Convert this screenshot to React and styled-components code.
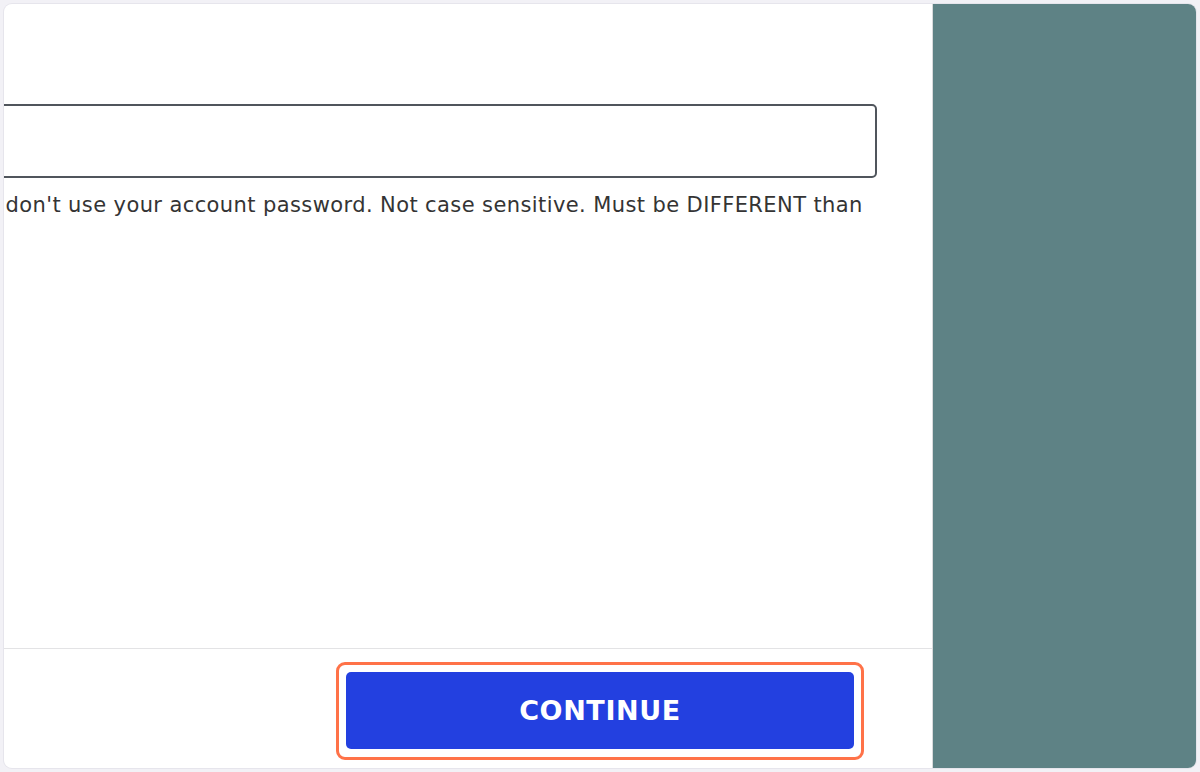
import styled, {createGlobalStyle} from "styled-components";

const GlobalStyle = createGlobalStyle`
  html, body {
    margin: 0;
    padding: 0;
    background: #f2f1f6;
  }
  * {
    box-sizing: border-box;
  }
`

const Frame = styled.div`
  height: 772px;
  padding: 4px;
  font-family: "DejaVu Sans", "Noto Sans", sans-serif;
`

const Card = styled.div`
  display: flex;
  height: 100%;
  border-radius: 8px;
  overflow: hidden;
  background: #fff;
  box-shadow: 0 0 0 1px #e6e5ec;
`

const MainPane = styled.div`
  flex: 1;
  display: flex;
  flex-direction: column;
  min-width: 0;
  overflow: hidden;
  border-right: 1px solid #d9dadc;
`

// the form is wider than the visible pane, its left part lies off-screen
const FormArea = styled.div`
  flex: 1;
  padding: 100px 55px 0 0;
  margin-left: -60px;
`

const PinInput = styled.input`
  display: block;
  width: 100%;
  height: 74px;
  border: 2px solid #50555c;
  border-radius: 5px;
  outline: none;
  background: #fff;
`

const Hint = styled.p`
  margin: 15px 0 0 47px;
  font-size: 21px;
  line-height: 24px;
  letter-spacing: 0.4px;
  color: #343434;
  white-space: nowrap;
`

const Footer = styled.div`
  display: flex;
  justify-content: flex-end;
  align-items: flex-start;
  height: 120px;
  padding: 13px 68px 0 0;
  border-top: 1px solid #e3e3e5;
`

const FocusRing = styled.div`
  padding: 7px 7px 8px;
  border: 3px solid #ff7248;
  border-radius: 9px;
`

const PrimaryButton = styled.button`
  display: block;
  width: 508px;
  height: 77px;
  padding: 0;
  border: none;
  border-radius: 5px;
  background: #2340e0;
  color: #fff;
  font-family: "DejaVu Sans", "Noto Sans", sans-serif;
  font-weight: 700;
  font-size: 27px;
  letter-spacing: 0.6px;
  cursor: pointer;
`

const SidePane = styled.div`
  width: 263px;
  background: #5e8285;
`

export default function App() {
    return (
        <>
            <GlobalStyle/>
            <Frame>
                <Card>
                    <MainPane>
                        <FormArea>
                            <PinInput type="password" aria-label="PIN"/>
                            <Hint>; don't use your account password. Not case sensitive. Must be DIFFERENT than</Hint>
                        </FormArea>
                        <Footer>
                            <FocusRing>
                                <PrimaryButton type="button">CONTINUE</PrimaryButton>
                            </FocusRing>
                        </Footer>
                    </MainPane>
                    <SidePane/>
                </Card>
            </Frame>
        </>
    )
}
